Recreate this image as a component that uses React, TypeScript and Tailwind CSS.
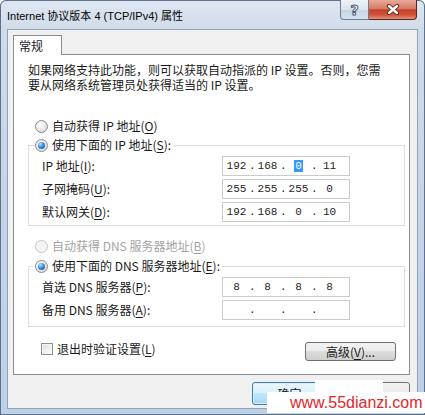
import { Fragment } from 'react';

const cjk = "font-['Noto_Sans_CJK_SC',sans-serif]";

const U = ({ c }: { c: string }) => <span className="underline underline-offset-[2px] decoration-[1px]">{c}</span>;

const Radio = ({ checked, disabled }: { checked?: boolean; disabled?: boolean }) => (
  <div
    className={`w-[13px] h-[13px] rounded-full border flex items-center justify-center shrink-0 ${
      disabled
        ? 'border-[#c4c4c4] bg-[#f4f4f4]'
        : 'border-[#8a8c8f] bg-[radial-gradient(circle_at_40%_35%,#ffffff_0%,#e6e6e6_55%,#cfcfcf_100%)]'
    }`}
  >
    {checked && (
      <div className="w-[7px] h-[7px] rounded-full bg-[radial-gradient(circle_at_35%_30%,#b8e0ff_0%,#3b8ee0_45%,#0c4c9c_100%)]" />
    )}
  </div>
);

const IpBox = ({ parts, sel }: { parts: string[]; sel?: number }) => (
  <div className="w-[128px] h-[20px] border border-[#c8ccd2] bg-white flex items-center pl-[1px] font-['Liberation_Mono',monospace] text-[11px] text-[#1e1e1e]">
    {parts.map((p, i) => (
      <Fragment key={i}>
        {i > 0 && <span className="w-[6px] text-center">.</span>}
        <span className="w-[25px] text-center">
          {i === sel ? <span className="bg-[#3399ff] text-white px-[1px]">{p}</span> : p}
        </span>
      </Fragment>
    ))}
  </div>
);

const Row = ({ label, parts, sel }: { label: React.ReactNode; parts: string[]; sel?: number }) => (
  <div className="h-[20px] flex items-center">
    <div className="w-[180px]">{label}</div>
    <IpBox parts={parts} sel={sel} />
  </div>
);

const App = () => {
  return (
    <div
      className={`${cjk} relative w-[425px] h-[415px] overflow-hidden flex flex-col text-[12px] text-[#1a1a1a] bg-[linear-gradient(180deg,#dfe7f1_0%,#cfdbe9_8%,#c3d4e8_60%,#bcd0e6_100%)] shadow-[inset_0_0_0_1px_#5d7189] rounded-t-[6px]`}
    >
      {/* Title bar */}
      <div className="h-[29px] flex items-start shrink-0">
        <div className="flex-1 pl-[7px] pt-[8px] leading-[16px] text-[11px] text-black font-['Liberation_Sans','Noto_Sans_CJK_SC',sans-serif]">
          Internet 协议版本 4 (TCP/IPv4) 属性
        </div>
        <div className="flex mr-[8px]">
          <div className="w-[29px] h-[20px] border border-t-0 border-[#6b7c90] rounded-bl-[4px] bg-[linear-gradient(180deg,#eef3f8_0%,#d9e3ee_50%,#c5d3e3_51%,#d8e3ef_100%)] flex items-center justify-center">
            <span className="font-['DejaVu_Sans',sans-serif] font-bold text-[14px] leading-none text-white [-webkit-text-stroke:1px_#4b5b70]">?</span>
          </div>
          <div className="w-[48px] h-[20px] border border-t-0 border-l-0 border-[#5e2419] rounded-br-[4px] bg-[linear-gradient(180deg,#e9a99a_0%,#d77a66_45%,#c43f26_52%,#d2563d_80%,#e4937c_100%)] flex items-center justify-center">
            <svg width="14" height="11" viewBox="0 0 14 11">
              <path d="M3 2 L11 9 M11 2 L3 9" stroke="#5a1d12" strokeWidth="4.2" strokeLinecap="round" />
              <path d="M3 2 L11 9 M11 2 L3 9" stroke="#ffffff" strokeWidth="2.4" strokeLinecap="round" />
            </svg>
          </div>
        </div>
      </div>

      {/* Client area */}
      <div className="mx-[7px] h-[380px] border border-[#8ea3bb] bg-[#f0f0f0] pt-[5px] pl-[5px] pr-[7px] flex flex-col">
        <div className="relative z-10 w-[49px] h-[20px] -mb-[1px] border border-b-0 border-[#898c95] bg-white pl-[5px] leading-[19px] text-[12px]">
          常规
        </div>
        <div className="h-[321px] border border-[#898c95] bg-white flex flex-col">
          <p className="ml-[14px] mt-[7px] leading-[15px]">
            如果网络支持此功能，则可以获取自动指派的 IP 设置。否则，您需
            <br />
            要从网络系统管理员处获得适当的 IP 设置。
          </p>

          <div className="ml-[21px] mt-[27px] h-[14px] flex items-center gap-[4px]">
            <Radio />
            <span>
              自动获得 IP 地址(<U c="O" />)
            </span>
          </div>

          <fieldset className="ml-[14px] mt-[5px] w-[377px] border border-[#d5dfe5] p-0">
            <legend className="ml-[6px] pr-[2px] h-[14px] flex items-center gap-[4px]">
              <Radio checked />
              <span>
                使用下面的 IP 地址(<U c="S" />):
              </span>
            </legend>
            <div className="pt-[4px] pb-[3px] pl-[13px] flex flex-col gap-[3px]">
              <Row label={<>IP 地址(<U c="I" />):</>} parts={['192', '168', '0', '11']} sel={2} />
              <Row label={<>子网掩码(<U c="U" />):</>} parts={['255', '255', '255', '0']} />
              <Row label={<>默认网关(<U c="D" />):</>} parts={['192', '168', '0', '10']} />
            </div>
          </fieldset>

          <div className="ml-[21px] mt-[13px] h-[14px] flex items-center gap-[4px] text-[#a3a3a3]">
            <Radio disabled />
            <span>
              自动获得 DNS 服务器地址(<U c="B" />)
            </span>
          </div>

          <fieldset className="ml-[14px] mt-[6px] w-[377px] border border-[#d5dfe5] p-0">
            <legend className="ml-[6px] pr-[2px] h-[14px] flex items-center gap-[4px]">
              <Radio checked />
              <span>
                使用下面的 DNS 服务器地址(<U c="E" />):
              </span>
            </legend>
            <div className="pt-[4px] pb-[6px] pl-[13px] flex flex-col gap-[3px]">
              <Row label={<>首选 DNS 服务器(<U c="P" />):</>} parts={['8', '8', '8', '8']} />
              <Row label={<>备用 DNS 服务器(<U c="A" />):</>} parts={['', '', '', '']} />
            </div>
          </fieldset>

          <div className="mt-[15px] h-[19px] flex items-start justify-between">
            <div className="ml-[27px] h-[13px] flex items-center gap-[4px]">
              <div className="w-[12px] h-[12px] border border-[#8e8f8f] bg-[linear-gradient(135deg,#dcdcdc_0%,#f2f2f2_60%,#ffffff_100%)] shadow-[inset_0_0_0_1px_#f4f4f4]" />
              <span>
                退出时验证设置(<U c="L" />)
              </span>
            </div>
            <div className="mr-[13px] w-[91px] h-[19px] rounded-[3px] border border-[#707070] bg-[linear-gradient(180deg,#f2f2f2_0%,#ebebeb_49%,#dddddd_50%,#cfcfcf_100%)] flex items-center justify-center leading-none">
              高级(<U c="V" />)...
            </div>
          </div>
        </div>

        <div className="mt-[7px] flex justify-end gap-[8px]">
          <div className="w-[75px] h-[23px] rounded-[3px] border border-[#3c7fb1] bg-[linear-gradient(180deg,#eaf6fd_0%,#d9f0fc_49%,#bee6fd_50%,#a7d9f5_100%)] shadow-[inset_0_0_0_1px_#d8eefb] flex items-center justify-center">
            确定
          </div>
          <div className="w-[75px] h-[23px] rounded-[3px] border border-[#707070] bg-[linear-gradient(180deg,#f2f2f2_0%,#ebebeb_49%,#dddddd_50%,#cfcfcf_100%)]" />
        </div>
      </div>

      {/* watermark overlay */}
      <div className="absolute left-[315px] top-[380px] w-[68px] h-[13px] bg-white" />
      <div className="absolute left-[267px] top-[392px] w-[158px] h-[21px] bg-white flex items-center pl-[23px]">
        <span className="font-['Liberation_Sans',sans-serif] text-[16px] leading-none text-[#e3262a]">www.55dianzi.com</span>
      </div>
    </div>
  );
};

export default App;
